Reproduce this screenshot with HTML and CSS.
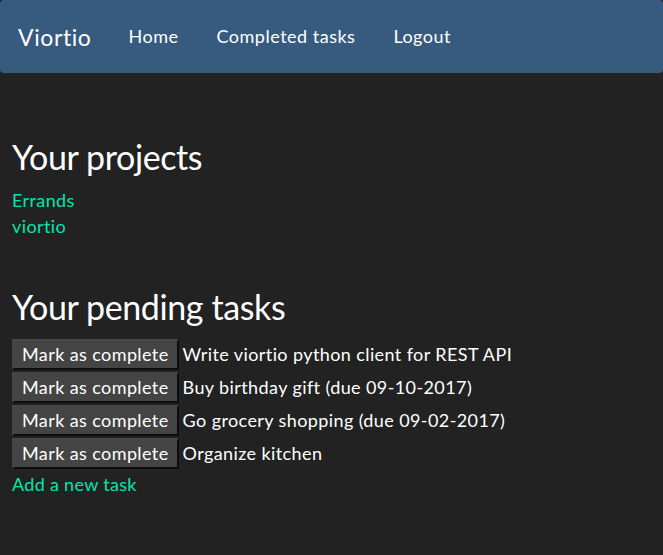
FILE: index.html
```html
<!DOCTYPE html>
<html>
<head>
<meta charset="utf-8">
<title>Viortio</title>
<link rel="stylesheet" href="styles.css">
</head>
<body>
<nav class="navbar">
  <a class="brand" href="#">Viortio</a>
  <ul class="nav">
    <li><a href="#">Home</a></li>
    <li><a href="#">Completed tasks</a></li>
    <li><a href="#">Logout</a></li>
  </ul>
</nav>
<main class="content">
  <h2 class="heading">Your projects</h2>
  <ul class="projects">
    <li><a href="#">Errands</a></li>
    <li><a href="#">viortio</a></li>
  </ul>
  <h2 class="heading heading-tasks">Your pending tasks</h2>
  <ul class="tasks">
    <li><button class="btn">Mark as complete</button><span class="task-name">Write viortio python client for REST API</span></li>
    <li><button class="btn">Mark as complete</button><span class="task-name">Buy birthday gift (due 09-10-2017)</span></li>
    <li><button class="btn">Mark as complete</button><span class="task-name">Go grocery shopping (due 09-02-2017)</span></li>
    <li><button class="btn">Mark as complete</button><span class="task-name">Organize kitchen</span></li>
  </ul>
  <a class="add-link" href="#">Add a new task</a>
</main>
</body>
</html>
```
FILE: styles.css
```css
html, body {
  margin: 0;
  padding: 0;
  background: #222222;
  color: #ffffff;
  font-family: Lato, "Open Sans", sans-serif;
  font-size: 18px;
  line-height: 26px;
  letter-spacing: 0.4px;
  font-variant-ligatures: none;
}
a {
  color: #0ce3ac;
  text-decoration: none;
}
.navbar {
  display: flex;
  align-items: center;
  height: 73px;
  background: #375a7f;
  border-radius: 4px;
}
.brand {
  color: #ffffff;
  font-size: 23px;
  line-height: 30px;
  letter-spacing: 0.6px;
  padding: 0 18px;
}
.nav {
  display: flex;
  list-style: none;
  margin: 0;
  padding: 0;
}
.nav a {
  display: block;
  color: #ffffff;
  font-size: 18px;
  line-height: 25px;
  letter-spacing: 0.5px;
  padding: 0 19px;
}
.content {
  padding: 0 12px;
}
.heading {
  font-size: 34px;
  line-height: 40px;
  font-weight: 400;
  letter-spacing: -0.4px;
  margin: 64px 0 10px;
}
.heading-tasks {
  margin: 48px 0 12px;
}
.projects {
  list-style: none;
  margin: 0;
  padding: 0;
}
.tasks {
  list-style: none;
  margin: 0;
  padding: 0;
}
.tasks li {
  display: flex;
  align-items: flex-start;
  height: 33px;
}
.btn {
  font-family: Lato, "Open Sans", sans-serif;
  font-size: 18px;
  line-height: 25px;
  letter-spacing: 0.4px;
  font-variant-ligatures: none;
  color: #ffffff;
  background: #444444;
  padding: 1px 8px;
  border: 2px solid;
  border-color: #474747 #0d0d0d #0d0d0d #474747;
  border-radius: 0;
  margin: 0 4px 0 0;
}
.task-name {
  line-height: 31px;
}
.add-link {
  display: inline-block;
  margin-top: -1px;
  letter-spacing: 0.3px;
}
```
